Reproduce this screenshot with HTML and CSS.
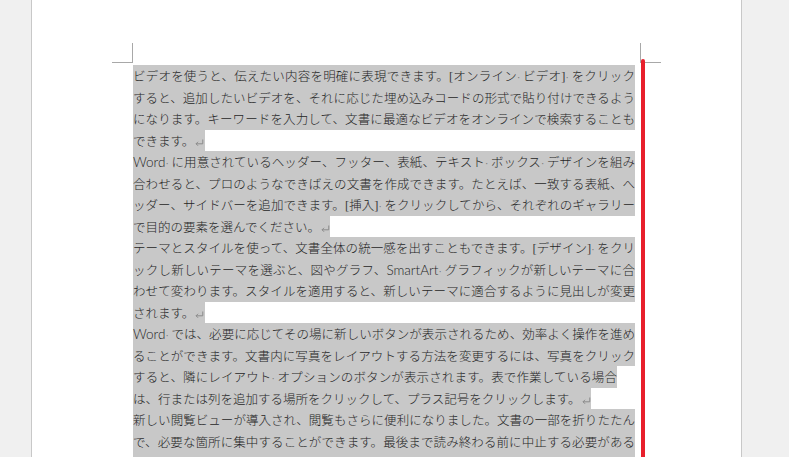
FILE: index.html
```html
<!DOCTYPE html>
<html lang="ja">
<head>
<meta charset="utf-8">
<title>文書</title>
<link rel="stylesheet" href="styles.css">
</head>
<body>
<div class="page">
  <div class="marks"><div class="mark-l"></div><div class="mark-r"></div></div>
  <div class="text">
    <div class="ln full">ビデオを使うと、伝えたい内容を明確に表現できます。<span class="br">[</span>オンライン<span class="sp">·</span>ビデオ<span class="br">]</span><span class="sp">·</span>をクリック</div>
    <div class="ln full">すると、追加したいビデオを、それに応じた埋め込みコードの形式で貼り付けできるよう</div>
    <div class="ln full">になります。キーワードを入力して、文書に最適なビデオをオンラインで検索することも</div>
    <div class="ln">できます。<svg class="ret" viewBox="0 0 10 10"><path d="M8.5 2.5V6.8H1.8M3.8 4.8L1.8 6.8L3.8 8.8"/></svg></div>
    <div class="ln full"><span class="lat">Word</span><span class="sp">·</span>に用意されているヘッダー、フッター、表紙、テキスト<span class="sp">·</span>ボックス<span class="sp">·</span>デザインを組み</div>
    <div class="ln full">合わせると、プロのようなできばえの文書を作成できます。たとえば、一致する表紙、へ</div>
    <div class="ln full">ッダー、サイドバーを追加できます。<span class="br">[</span>挿入<span class="br">]</span><span class="sp">·</span>をクリックしてから、それぞれのギャラリー</div>
    <div class="ln">で目的の要素を選んでください。<svg class="ret" viewBox="0 0 10 10"><path d="M8.5 2.5V6.8H1.8M3.8 4.8L1.8 6.8L3.8 8.8"/></svg></div>
    <div class="ln full">テーマとスタイルを使って、文書全体の統一感を出すこともできます。<span class="br">[</span>デザイン<span class="br">]</span><span class="sp">·</span>をクリ</div>
    <div class="ln full">ックし新しいテーマを選ぶと、図やグラフ、<span class="lat">SmartArt</span><span class="sp">·</span>グラフィックが新しいテーマに合</div>
    <div class="ln full">わせて変わります。スタイルを適用すると、新しいテーマに適合するように見出しが変更</div>
    <div class="ln">されます。<svg class="ret" viewBox="0 0 10 10"><path d="M8.5 2.5V6.8H1.8M3.8 4.8L1.8 6.8L3.8 8.8"/></svg></div>
    <div class="ln full"><span class="lat">Word</span><span class="sp">·</span>では、必要に応じてその場に新しいボタンが表示されるため、効率よく操作を進め</div>
    <div class="ln full">ることができます。文書内に写真をレイアウトする方法を変更するには、写真をクリック</div>
    <div class="ln part">すると、隣にレイアウト<span class="sp">·</span>オプションのボタンが表示されます。表で作業している場合</div>
    <div class="ln">は、行または列を追加する場所をクリックして、プラス記号をクリックします。<svg class="ret" viewBox="0 0 10 10"><path d="M8.5 2.5V6.8H1.8M3.8 4.8L1.8 6.8L3.8 8.8"/></svg></div>
    <div class="ln full">新しい閲覧ビューが導入され、閲覧もさらに便利になりました。文書の一部を折りたたん</div>
    <div class="ln full">で、必要な箇所に集中することができます。最後まで読み終わる前に中止する必要がある</div>
    <div class="ln full">場合でも、<span class="lat">Word</span><span class="sp">·</span>では、たとえ別のデバイスであっても、どこまで読んだかが記憶されま</div>
  </div>
  <div class="redbar"></div>
</div>
</body>
</html>
```

FILE: styles.css
```css
html, body {
  margin: 0;
  padding: 0;
  height: 457px;
  overflow: hidden;
  background: #f0f0f0;
}

.page {
  margin-left: 31px;
  width: 709px;
  height: 457px;
  overflow: hidden;
  background: #ffffff;
  border-left: 1px solid #c8c8c8;
  border-right: 1px solid #c8c8c8;
  position: relative;
  font-family: "Noto Sans CJK JP", sans-serif;
  font-weight: 300;
  font-size: 12.5px;
  color: #262626;
}

.marks {
  display: flex;
  margin-top: 43px;
  padding-left: 80px;
  height: 20px;
}

.mark-l {
  width: 20px;
  height: 19px;
  border-right: 1px solid #a8a8a8;
  border-bottom: 1px solid #a8a8a8;
}

.mark-r {
  margin-left: 507px;
  width: 20px;
  height: 19px;
  border-left: 1px solid #a8a8a8;
  border-bottom: 1px solid #a8a8a8;
}

.text {
  margin-top: 2px;
  margin-left: 101px;
  width: 502px;
}

.ln {
  height: 21.5px;
  line-height: 21.5px;
  background: #c8c8c8;
  white-space: nowrap;
  width: fit-content;
}

.ln.full {
  width: 502px;
  text-align: justify;
  text-align-last: justify;
}

.ln.part {
  width: 484px;
  text-align: justify;
  text-align-last: justify;
}

.lat {
  font-family: Lato, "Liberation Sans", sans-serif;
  font-weight: 300;
  font-size: 13.5px;
  color: #1e1e1e;
}

.br {
  font-family: "Liberation Serif", serif;
  font-weight: 400;
  color: #3a3a3a;
}

.sp {
  display: inline-block;
  width: 6px;
  font-family: "Liberation Sans", sans-serif;
  font-size: 10px;
  color: #7a7a7a;
  text-align: left;
}

.ret {
  display: inline-block;
  width: 10.5px;
  height: 10px;
  vertical-align: -1px;
  fill: none;
  stroke: #858585;
  stroke-width: 0.9;
}

.redbar {
  position: absolute;
  left: 609px;
  top: 59px;
  bottom: 0;
  width: 3.5px;
  background: #e8202c;
  border-radius: 2px 2px 0 0;
}
```
